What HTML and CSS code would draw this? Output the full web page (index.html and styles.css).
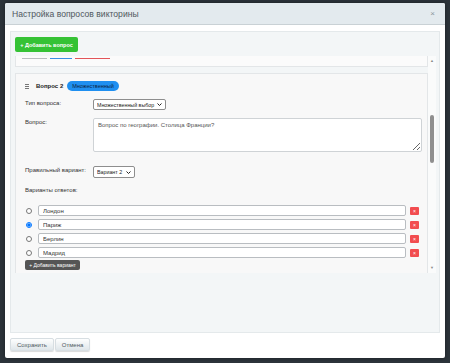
FILE: index.html
```html
<!DOCTYPE html>
<html>
<head>
    <title>Настройка вопросов викторины</title>
    <link rel="stylesheet" href="styles.css">
</head>

<body>
    <div class="dialog">
        <div class="dialogHeader">
            <span class="dialogTitle">Настройка вопросов викторины</span>
            <span class="closeButton">×</span>
        </div>

        <div class="dialogBody">
            <div class="panel">
                <button class="addQuestion">+ Добавить вопрос</button>

                <div class="scrollArea">
                    <div class="viewport">
                        <!-- tail of question 1, scrolled out of view -->
                        <div class="cardTail">
                            <span class="tailLine grayLine"></span>
                            <span class="tailLine blueLine"></span>
                            <span class="tailLine redLine"></span>
                        </div>

                        <div class="card">
                            <div class="cardHeader">
                                <svg class="dragIcon" width="4" height="5" viewBox="0 0 4 5">
                                    <path d="M0 0.5H4M0 2.5H4M0 4.5H4" stroke="#555" stroke-width="0.8"/>
                                </svg>
                                <span class="questionNumber">Вопрос 2</span>
                                <span class="typeBadge">Множественный</span>
                            </div>

                            <div class="fieldRow typeRow">
                                <label class="fieldLabel">Тип вопроса:</label>
                                <span class="selectBox typeSelect">
                                    <select class="fieldSelect">
                                        <option>Множественный выбор</option>
                                    </select>
                                    <svg class="chevron" width="5" height="3" viewBox="0 0 5 3">
                                        <path d="M0.5 0.5L2.5 2.5L4.5 0.5" fill="none" stroke="#222" stroke-width="1"/>
                                    </svg>
                                </span>
                            </div>

                            <div class="fieldRow questionRow">
                                <label class="fieldLabel">Вопрос:</label>
                                <textarea class="questionText">Вопрос по географии. Столица Франции?</textarea>
                            </div>

                            <div class="fieldRow correctRow">
                                <label class="fieldLabel">Правильный вариант:</label>
                                <span class="selectBox correctSelect">
                                    <select class="fieldSelect">
                                        <option>Вариант 2</option>
                                    </select>
                                    <svg class="chevron" width="5" height="3" viewBox="0 0 5 3">
                                        <path d="M0.5 0.5L2.5 2.5L4.5 0.5" fill="none" stroke="#222" stroke-width="1"/>
                                    </svg>
                                </span>
                            </div>

                            <div class="answersTitle">Варианты ответов:</div>

                            <div class="answers">
                                <div class="answerRow">
                                    <input type="radio" name="correct" class="answerRadio">
                                    <input type="text" class="answerInput" value="Лондон">
                                    <button class="removeAnswer">×</button>
                                </div>
                                <div class="answerRow">
                                    <input type="radio" name="correct" class="answerRadio" checked>
                                    <input type="text" class="answerInput" value="Париж">
                                    <button class="removeAnswer">×</button>
                                </div>
                                <div class="answerRow">
                                    <input type="radio" name="correct" class="answerRadio">
                                    <input type="text" class="answerInput" value="Берлин">
                                    <button class="removeAnswer">×</button>
                                </div>
                                <div class="answerRow">
                                    <input type="radio" name="correct" class="answerRadio">
                                    <input type="text" class="answerInput" value="Мадрид">
                                    <button class="removeAnswer">×</button>
                                </div>
                            </div>

                            <button class="addAnswer">+ Добавить вариант</button>
                        </div>
                    </div>

                    <div class="scrollbar">
                        <span class="scrollArrow">▲</span>
                        <div class="scrollTrack">
                            <div class="scrollThumb"></div>
                        </div>
                        <span class="scrollArrow">▼</span>
                    </div>
                </div>
            </div>
        </div>

        <div class="dialogFooter">
            <button class="footerButton">Сохранить</button>
            <button class="footerButton">Отмена</button>
        </div>
    </div>
</body>

</html>
```

FILE: styles.css
```css
* {
    box-sizing: border-box;
}

body {
    margin: 0;
    padding: 3px 5px;
    background-color: #2c333a;
    font-family: "Liberation Sans", Arial, sans-serif;
}

.dialog {
    display: flex;
    flex-direction: column;
    width: 440px;
    height: 355px;
    background-color: #fff;
    border-radius: 2px;
    box-shadow: 0 0 4px rgba(0, 0, 0, 0.4);
}

.dialogHeader {
    display: flex;
    align-items: center;
    justify-content: space-between;
    height: 22px;
    padding: 0 10px 0 7px;
    background-color: #e3eaee;
    border-bottom: 1px solid #c9d1d5;
    border-radius: 2px 2px 0 0;
}

.dialogTitle {
    font-size: 8.6px;
    color: #505860;
}

.closeButton {
    font-size: 8px;
    color: #8c969d;
}

.dialogBody {
    padding: 6px 5px 0 5px;
}

.panel {
    height: 302px;
    padding: 5px 3px 0 4px;
    background-color: #f3f6f7;
    border: 1px solid #e4e9eb;
}

.addQuestion {
    display: block;
    width: 63px;
    height: 15px;
    padding: 0;
    border: none;
    border-radius: 2px;
    background-color: #35c235;
    color: #fff;
    font-family: "Liberation Sans", Arial, sans-serif;
    font-size: 5.5px;
    font-weight: bold;
}

.scrollArea {
    display: flex;
    height: 217px;
    margin-top: 4px;
}

.viewport {
    flex: 1;
    overflow: hidden;
}

.cardTail {
    display: flex;
    height: 11px;
    padding: 2px 0 0 6px;
    gap: 3px;
    background-color: #fbfbfb;
    border: 1px solid #e3e6e8;
    border-top: none;
}

.tailLine {
    height: 1px;
}

.grayLine {
    width: 25px;
    background-color: #b9bdc0;
}

.blueLine {
    width: 22px;
    background-color: #3a8ee6;
}

.redLine {
    width: 35px;
    background-color: #e2555a;
}

.card {
    margin-top: 6px;
    height: 300px;
    padding: 7px 4px 0 9px;
    background-color: #f8f8f8;
    border: 1px solid #e3e6e8;
}

.cardHeader {
    display: flex;
    align-items: center;
    height: 10px;
}

.dragIcon {
    margin-right: 7px;
}

.questionNumber {
    font-size: 6px;
    font-weight: bold;
    color: #222;
    margin-right: 4px;
}

.typeBadge {
    height: 10px;
    padding: 0 5px;
    line-height: 10px;
    border-radius: 5px;
    background-color: #1f8ff0;
    color: #0d2440;
    font-size: 5.5px;
}

.fieldRow {
    display: flex;
    align-items: flex-start;
}

.fieldLabel {
    width: 68px;
    padding-top: 1px;
    font-size: 6px;
    color: #333;
}

.typeRow {
    margin-top: 8px;
}

.questionRow {
    margin-top: 8px;
}

.correctRow {
    margin-top: 14px;
}

.selectBox {
    display: flex;
    align-items: center;
    height: 11px;
    padding: 0 3px 0 0;
    background-color: #fff;
    border: 1px solid #8e8e8e;
    border-radius: 2px;
}

.typeSelect {
    width: 73px;
}

.correctSelect {
    width: 42px;
    height: 12px;
}

.fieldSelect {
    flex: 1;
    min-width: 0;
    height: 100%;
    padding: 0 0 0 3px;
    appearance: none;
    font-family: "Liberation Sans", Arial, sans-serif;
    font-size: 5.3px;
    color: #222;
    background: none;
    border: none;
    outline: none;
}

.chevron {
    flex: none;
}

.questionText {
    width: 329px;
    height: 34px;
    padding: 3px 4px;
    font-family: "Liberation Sans", Arial, sans-serif;
    font-size: 6px;
    color: #555;
    background-color: #fff;
    border: 1px solid #cfd3d6;
    border-radius: 2px;
}

.answersTitle {
    margin-top: 9px;
    font-size: 6px;
    color: #333;
}

.answers {
    display: flex;
    flex-direction: column;
    gap: 3px;
    margin-top: 12px;
    margin-right: 4px;
}

.answerRow {
    display: flex;
    align-items: center;
    height: 11px;
}

.answerRadio {
    width: 6px;
    height: 6px;
    margin: 0 6px 0 1px;
}

.answerInput {
    flex: 1;
    height: 11px;
    padding: 0 4px;
    font-family: "Liberation Sans", Arial, sans-serif;
    font-size: 6px;
    color: #333;
    background-color: #fff;
    border: 1px solid #b9bdc1;
    border-radius: 2px;
}

.removeAnswer {
    width: 9px;
    height: 8px;
    margin-left: 4px;
    padding: 0;
    border: none;
    border-radius: 1px;
    background-color: #f24d50;
    color: #fff;
    font-size: 5px;
    line-height: 8px;
}

.addAnswer {
    display: block;
    width: 55px;
    height: 10px;
    margin-top: 2px;
    padding: 0;
    border: none;
    border-radius: 2px;
    background-color: #555;
    color: #fff;
    font-family: "Liberation Sans", Arial, sans-serif;
    font-size: 5px;
}

.scrollbar {
    display: flex;
    flex-direction: column;
    align-items: center;
    width: 8px;
    background-color: #fafbfb;
}

.scrollArrow {
    height: 10px;
    font-size: 4px;
    line-height: 10px;
    color: #8a8a8a;
}

.scrollTrack {
    flex: 1;
    width: 100%;
    display: flex;
    justify-content: center;
}

.scrollThumb {
    width: 4px;
    height: 48px;
    margin-top: 49px;
    border-radius: 2px;
    background-color: #8f8f8f;
}

.dialogFooter {
    display: flex;
    gap: 1px;
    padding: 5px 5px 0 5px;
}

.footerButton {
    height: 13px;
    padding: 0 6px;
    font-family: "Liberation Sans", Arial, sans-serif;
    font-size: 6px;
    color: #4f5a62;
    background: linear-gradient(#fdfefe, #dfe6ea);
    border: 1px solid #d7dee2;
    border-radius: 2px;
    box-shadow: 0 1px 1px rgba(0, 0, 0, 0.15);
}
```
